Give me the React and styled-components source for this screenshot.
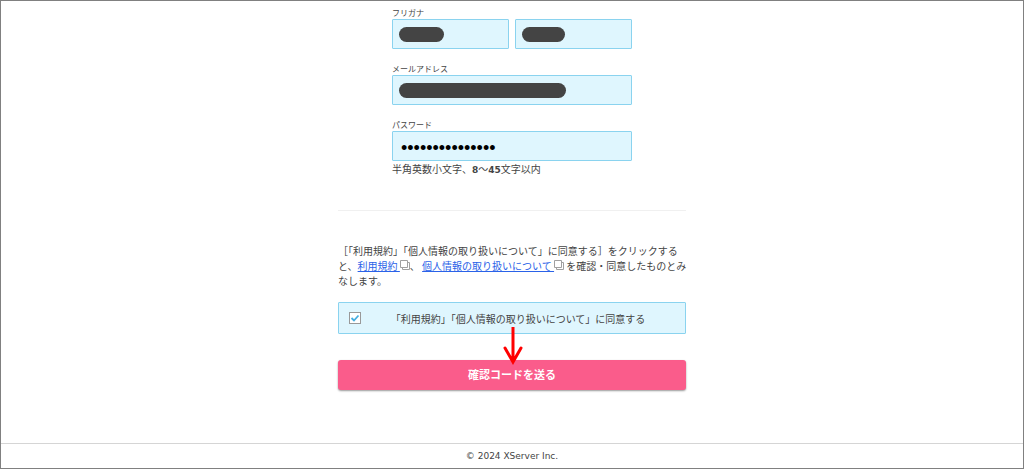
import { useState } from 'react';
import styled, { createGlobalStyle } from 'styled-components';

function WindowIcon() {
    return (
        <IconSvg viewBox="0 0 10 10" aria-hidden="true">
            <path d="M8 2.5h1.5v7h-7V8" />
            <path d="M.5 .5h7v7h-7z" />
        </IconSvg>
    )
}

function App() {
    const [password, setPassword] = useState('abcdefgh1234567');
    const [agree, setAgree] = useState(true);
    const handleSubmit = (e) => { e.preventDefault(); };

    return (
        <>
            <GlobalStyle />
            <Page>
                <Form onSubmit={handleSubmit}>
                    <Fields>
                        <Field>
                            <Label htmlFor="kana1">フリガナ</Label>
                            <Row>
                                <InputBox>
                                    <Input id="kana1" type="text" />
                                    <Mask $width={45} />
                                </InputBox>
                                <InputBox>
                                    <Input id="kana2" type="text" aria-label="フリガナ" />
                                    <Mask $width={43} />
                                </InputBox>
                            </Row>
                        </Field>
                        <Field>
                            <Label htmlFor="mail">メールアドレス</Label>
                            <InputBox>
                                <Input id="mail" type="email" />
                                <Mask $width={167} />
                            </InputBox>
                        </Field>
                        <Field>
                            <Label htmlFor="password">パスワード</Label>
                            <Input id="password" type="password" value={password} onChange={(e) => setPassword(e.target.value)} />
                            <Help>半角英数小文字、<b>8</b>〜<b>45</b>文字以内</Help>
                        </Field>
                    </Fields>
                    <Line />
                    <Terms>
                        ［「利用規約」「個人情報の取り扱いについて」に同意する］をクリックする<br />
                        と、<a href="#terms">利用規約 </a><WindowIcon />、 <a href="#privacy">個人情報の取り扱いについて </a><WindowIcon /> を確認・同意したものとみ<br />
                        なします。
                    </Terms>
                    <Agree>
                        <Check type="checkbox" checked={agree} onChange={(e) => setAgree(e.target.checked)} />
                        <span>「利用規約」「個人情報の取り扱いについて」に同意する</span>
                    </Agree>
                    <SendArea>
                        <SendButton type="submit">確認コードを送る</SendButton>
                        <Arrow viewBox="0 0 22 38" aria-hidden="true">
                            <path d="M11 0V34M3 21L11 35L19 21" />
                        </Arrow>
                    </SendArea>
                </Form>
                <Footer>© 2024 XServer Inc.</Footer>
            </Page>
        </>
    )
}
export default App

const GlobalStyle = createGlobalStyle`
* { box-sizing: border-box; }
body {
    margin: 0;
    background-color: #ffffff;
    color: #444444;
    font-family: "Noto Sans CJK JP", sans-serif;
    font-size: 10px;
    line-height: 15px;
}
`
const Page = styled.div`
min-height: 100vh;
display: flex;
flex-direction: column;
border: 1px solid #808080;
`
const Form = styled.form`
flex: 1;
width: 100%;
max-width: 348px;
margin: 0 auto;
padding-top: 6px;
`
const Fields = styled.div`
max-width: 240px;
margin: 0 auto;
display: flex;
flex-direction: column;
gap: 14px;
`
const Field = styled.div`
display: flex;
flex-direction: column;
`
const Row = styled.div`
display: flex;
gap: 6px;
`
const Label = styled.label`
font-size: 8px;
line-height: 12px;
`
const InputBox = styled.div`
position: relative;
flex: 1;
`
const Input = styled.input`
display: block;
width: 100%;
height: 30px;
padding: 4px 8px 0;
border: 1px solid #8ad3ef;
border-radius: 1px;
background-color: #dff6fe;
color: #000000;
font-family: "Liberation Sans", sans-serif;
font-size: 18px;
`
const Mask = styled.span`
position: absolute;
top: 8px;
left: 7px;
width: ${(props) => props.$width}px;
height: 15px;
border-radius: 8px;
background-color: #444444;
`
const Help = styled.p`
margin: 0;
b { font-family: "DejaVu Sans", sans-serif; font-size: 9px; }
`
const Line = styled.hr`
margin: 32px 0;
border: 0;
border-top: 1px solid #f0f0f0;
`
const Terms = styled.p`
margin: 0;
white-space: nowrap;
a { color: #2a62e8; text-decoration: underline; }
`
const IconSvg = styled.svg`
width: 10px;
height: 10px;
fill: #ffffff;
stroke: #a0a0a0;
`
const Agree = styled.label`
display: flex;
align-items: center;
height: 32px;
margin-top: 14px;
padding: 0 10px;
border: 1px solid #8ad3ef;
border-radius: 1px;
background-color: #dff6fe;
span { flex: 1; text-align: center; }
`
const Check = styled.input`
appearance: none;
width: 12px;
height: 12px;
margin: 0;
border: 1px solid #999999;
background-color: #ffffff;
&:checked {
    background-image: url("data:image/svg+xml,%3Csvg xmlns='http://www.w3.org/2000/svg' viewBox='0 0 10 10'%3E%3Cpath d='M1.5 5l2.5 2.5L8.5 2.5' fill='none' stroke='%2345aee0' stroke-width='1.8'/%3E%3C/svg%3E");
}
`
const SendArea = styled.div`
position: relative;
margin-top: 26px;
`
const SendButton = styled.button`
display: block;
width: 100%;
height: 30px;
padding: 0 0 3px;
border: 0;
border-radius: 3px;
background-color: #fa5c8b;
box-shadow: 0 1px 2px #999999;
color: #ffffff;
font-family: inherit;
font-size: 11px;
font-weight: bold;
`
const Arrow = styled.svg`
position: absolute;
top: -33px;
left: 50%;
width: 22px;
height: 38px;
margin-left: -10px;
fill: none;
stroke: #ff0000;
stroke-width: 3;
stroke-linecap: round;
pointer-events: none;
`
const Footer = styled.footer`
padding: 5px 0 4px;
border-top: 1px solid #d5d5d5;
text-align: center;
font-family: "DejaVu Sans", sans-serif;
font-size: 9px;
`
